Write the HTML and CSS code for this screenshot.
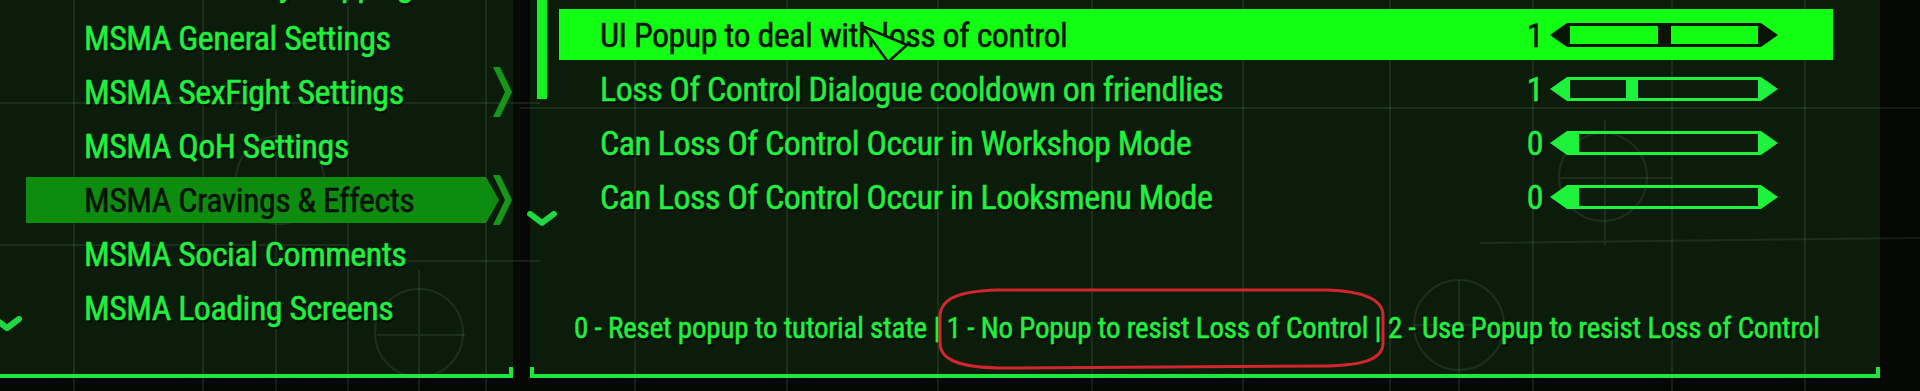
FILE: index.html
```html
<!DOCTYPE html>
<html lang="en">
<head>
  <meta charset="UTF-8" />
  <meta name="viewport" content="width=device-width, initial-scale=1.0"/>
  <title>MCM - MSMA Settings</title>
  <link rel="stylesheet" href="styles.css">
</head>
<body>

  <div class="screen">
    <svg class="grid" width="1920" height="391" viewBox="0 0 1920 391">
      <path d="M74 0V391 M203 0V391 M276 110V391 M348 0V391 M486 0V391 M635 0V391 M787 0V391 M938 0V391 M1092 0V391 M1243 0V391 M1390 0V391 M1533 0V391 M1672 0V391 M1805 0V391" />
      <path d="M0 103H540 M520 108H1920 M0 245H348 M348 261H540 M1480 243L1920 238 M419 270V391 M377 335H465 M1605 120V245 M1560 178H1672 M1459 280V391 M1414 325H1505" />
      <circle cx="280" cy="180" r="44" />
      <circle cx="419" cy="333" r="44" />
      <circle cx="1603" cy="177" r="44" />
      <circle cx="1459" cy="325" r="45" />
    </svg>

    <section class="panel menu-panel">
      <div class="panel-body">
        <div class="gutter">
          <svg class="more-down left-more" width="30" height="16" viewBox="0 0 30 16">
            <polyline points="3,3 15,12 27,3" />
          </svg>
        </div>
        <ul class="menu">
          <li class="menu-item"><span class="menu-label">MSMA Auto Key Mapping</span></li>
          <li class="menu-item"><span class="menu-label">MSMA General Settings</span></li>
          <li class="menu-item has-sub"><span class="menu-label">MSMA SexFight Settings</span>
            <svg class="chev" width="19" height="50" viewBox="0 0 19 50"><polygon points="0,0 7,0 19,25 7,50 0,50 12,25" /></svg>
          </li>
          <li class="menu-item"><span class="menu-label">MSMA QoH Settings</span></li>
          <li class="menu-item selected has-sub"><span class="menu-label">MSMA Cravings &amp; Effects</span>
            <svg class="chev" width="19" height="50" viewBox="0 0 19 50"><polygon points="0,0 7,0 19,25 7,50 0,50 12,25" /></svg>
          </li>
          <li class="menu-item"><span class="menu-label">MSMA Social Comments</span></li>
          <li class="menu-item"><span class="menu-label">MSMA Loading Screens</span></li>
        </ul>
      </div>
      <div class="panel-foot foot-left"></div>
    </section>

    <div class="divider"></div>

    <section class="panel settings-panel">
      <div class="settings-top">
        <div class="scroll-col">
          <div class="thumb"></div>
          <svg class="more-down" width="30" height="16" viewBox="0 0 30 16">
            <polyline points="3,3 15,12 27,3" />
          </svg>
        </div>
        <div class="rows">
          <div class="row selected">
            <span class="row-label">UI Popup to deal with loss of control</span>
            <span class="row-value">1</span>
            <svg class="slider" width="228" height="24" viewBox="0 0 228 24">
              <polygon points="0,12 17,0 17,24" />
              <rect class="track" x="18.5" y="1.5" width="191" height="21" />
              <rect x="108" y="0" width="13" height="24" />
              <polygon points="211,0 228,12 211,24" />
            </svg>
          </div>
          <div class="row">
            <span class="row-label">Loss Of Control Dialogue cooldown on friendlies</span>
            <span class="row-value">1</span>
            <svg class="slider" width="228" height="24" viewBox="0 0 228 24">
              <polygon points="0,12 17,0 17,24" />
              <rect class="track" x="18.5" y="1.5" width="191" height="21" />
              <rect x="76" y="0" width="12" height="24" />
              <polygon points="211,0 228,12 211,24" />
            </svg>
          </div>
          <div class="row">
            <span class="row-label">Can Loss Of Control Occur in Workshop Mode</span>
            <span class="row-value">0</span>
            <svg class="slider" width="228" height="24" viewBox="0 0 228 24">
              <polygon points="0,12 17,0 17,24" />
              <rect class="track" x="18.5" y="1.5" width="191" height="21" />
              <rect x="17" y="0" width="12" height="24" />
              <polygon points="211,0 228,12 211,24" />
            </svg>
          </div>
          <div class="row">
            <span class="row-label">Can Loss Of Control Occur in Looksmenu Mode</span>
            <span class="row-value">0</span>
            <svg class="slider" width="228" height="24" viewBox="0 0 228 24">
              <polygon points="0,12 17,0 17,24" />
              <rect class="track" x="18.5" y="1.5" width="191" height="21" />
              <rect x="17" y="0" width="12" height="24" />
              <polygon points="211,0 228,12 211,24" />
            </svg>
          </div>
        </div>
      </div>

      <p class="hint">0 - Reset popup to tutorial state | 1 - No Popup to resist Loss of Control | 2 - Use Popup to resist Loss of Control</p>

      <div class="panel-foot foot-right"></div>
    </section>

    <svg class="cursor" width="52" height="42" viewBox="0 0 52 42">
      <polygon points="3,2 48,21 29,38" />
    </svg>

    <svg class="ring" width="452" height="86" viewBox="0 0 452 86">
      <path d="M62 4 C22 5 4 13 4 31 L4 57 C4 74 24 81 62 82 L392 80 C428 79 447 73 447 57 L447 29 C447 13 425 5 392 4 Z" />
    </svg>
  </div>

</body>
</html>
```

FILE: styles.css
```css
html, body {
  margin: 0;
  width: 1920px;
  height: 391px;
  overflow: hidden;
  background: #040704;
}

body {
  font-family: "Roboto Condensed", "Liberation Sans Narrow", "DejaVu Sans Condensed", Roboto, sans-serif;
  color: #1ff23c;
  -webkit-text-stroke: 0.5px currentColor;
}

.screen {
  position: relative;
  z-index: 0;
  display: flex;
  width: 1920px;
  height: 391px;
}

.grid {
  position: absolute;
  top: 0;
  left: 0;
  z-index: 0;
  pointer-events: none;
  fill: none;
  stroke: rgba(170, 200, 170, 0.11);
  stroke-width: 2;
}

.panel {
  display: flex;
  flex-direction: column;
  height: 378px;
  background: #0b1c0b;
}

.menu-panel {
  width: 513px;
}

.settings-panel {
  width: 1350px;
}

.divider {
  width: 17px;
  height: 391px;
  background: #060806;
}

.panel-foot {
  margin-top: auto;
  height: 7px;
  border-bottom: 4px solid #1fe63a;
}

.foot-left {
  border-right: 4px solid #1fe63a;
}

.foot-right {
  border-left: 4px solid #1fe63a;
  border-right: 4px solid #1fe63a;
}

/* left menu */

.panel-body {
  position: relative;
  z-index: 1;
  display: flex;
  height: 367px;
  overflow: hidden;
}

.gutter {
  width: 26px;
  display: flex;
  flex-direction: column;
  justify-content: flex-end;
  padding-bottom: 35px;
  box-sizing: border-box;
}

.more-down {
  fill: none;
  stroke: #22d842;
  stroke-width: 6;
  stroke-linecap: round;
  stroke-linejoin: round;
}

.left-more {
  margin-left: -8px;
}

.menu {
  list-style: none;
  margin: -43px 0 0 0;
  padding: 0;
}

.menu-item {
  display: flex;
  align-items: center;
  height: 54px;
}

.menu-label {
  box-sizing: border-box;
  width: 473px;
  height: 46px;
  padding-left: 58px;
  line-height: 46px;
  font-size: 34px;
  letter-spacing: -0.5px;
  white-space: nowrap;
  text-shadow: 2px 2px 1px rgba(0, 0, 0, 0.8);
}

.chev {
  margin-left: -6px;
  fill: #17961a;
  visibility: hidden;
}

.has-sub .chev {
  visibility: visible;
}

.menu-item.selected .menu-label {
  background: #0d8c0f;
  color: #061306;
  text-shadow: none;
  clip-path: polygon(0 0, 460px 0, 473px 50%, 460px 100%, 0 100%);
}

/* settings list */

.settings-top {
  position: relative;
  z-index: 1;
  display: flex;
  height: 227px;
}

.scroll-col {
  display: flex;
  flex-direction: column;
  align-items: center;
  width: 30px;
  margin-left: -3px;
}

.thumb {
  width: 10px;
  height: 100px;
  background: #14f021;
}

.scroll-col .more-down {
  margin-top: 112px;
}

.rows {
  display: flex;
  flex-direction: column;
  gap: 3px;
  width: 1274px;
  margin-left: 2px;
  padding-top: 9px;
}

.row {
  display: flex;
  align-items: center;
  box-sizing: border-box;
  height: 51px;
  padding: 0 55px 0 41px;
  font-size: 34px;
  letter-spacing: -0.5px;
  text-shadow: 2px 2px 1px rgba(0, 0, 0, 0.8);
}

.row.selected {
  background: #12ff14;
  color: #071507;
  text-shadow: none;
}

.row-label {
  flex: 1;
  white-space: nowrap;
}

.row-value {
  margin-right: 7px;
}

.slider {
  fill: currentColor;
}

.slider .track {
  fill: none;
  stroke: currentColor;
  stroke-width: 3;
}

.hint {
  position: relative;
  z-index: 1;
  margin: 81px 0 0 44px;
  font-size: 29px;
  letter-spacing: -0.2px;
  line-height: 40px;
  white-space: nowrap;
  text-shadow: 2px 2px 1px rgba(0, 0, 0, 0.8);
}

/* overlays */

.cursor {
  position: absolute;
  left: 859px;
  top: 24px;
  z-index: 2;
  fill: #12ff14;
  stroke: #0a180a;
  stroke-width: 2.5;
  stroke-linejoin: round;
}

.ring {
  position: absolute;
  left: 936px;
  top: 286px;
  z-index: 2;
  fill: none;
  stroke: #d2262e;
  stroke-width: 3;
}
```
